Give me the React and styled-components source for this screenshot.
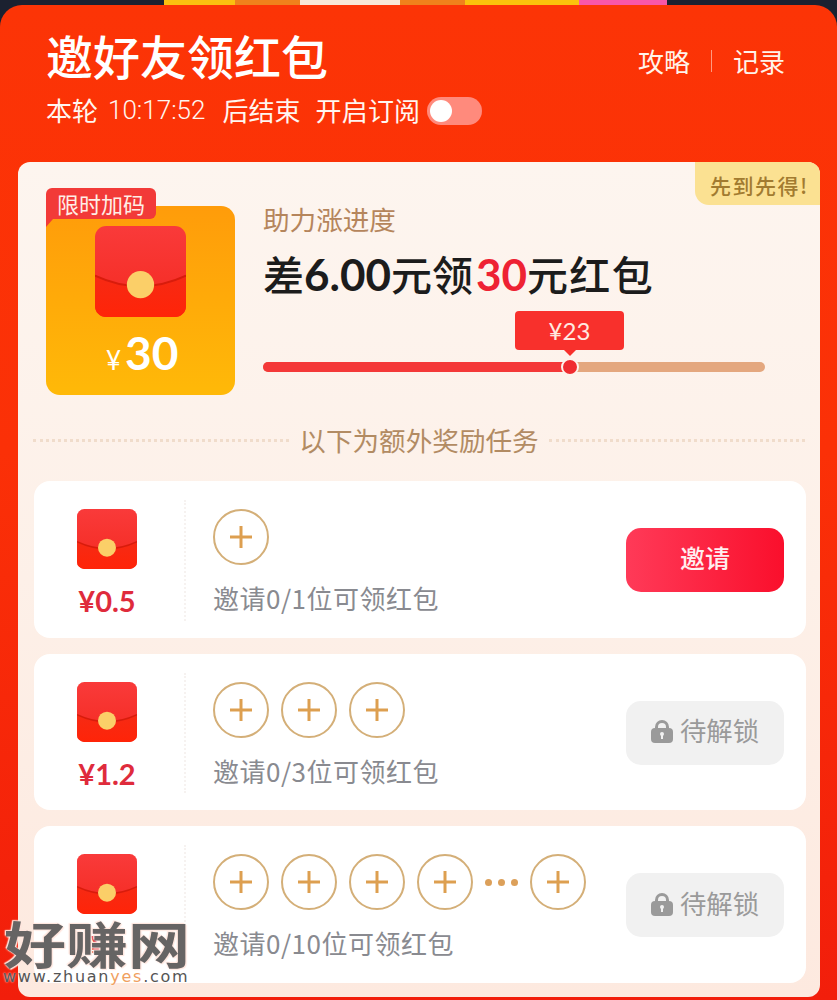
import React from 'react'
import styled, { createGlobalStyle } from 'styled-components'

const GlobalStyle = createGlobalStyle`
  html, body {
    margin: 0;
    padding: 0;
    background: #1b2130;
  }
  * {
    box-sizing: border-box;
  }
`

const cjk = `"Noto Sans CJK SC", "Noto Sans", sans-serif`
const numeric = `Lato, "Noto Sans CJK SC", sans-serif`

const Page = styled.div`
  position: relative;
  width: 837px;
  height: 1000px;
  overflow: hidden;
  font-family: ${cjk};
`

const TopStrip = styled.div`
  height: 5px;
  background: linear-gradient(
    to right,
    #1b2130 0 164px,
    #fbbf10 164px 235px,
    #f0811c 235px 300px,
    #f8e8d8 300px 400px,
    #f0811c 400px 465px,
    #fbc20c 465px 579px,
    #f957a8 579px 667px,
    #1b2130 667px
  );
`

const Panel = styled.div`
  height: 995px;
  padding: 0 17px 0 18px;
  border-radius: 22px 22px 0 0;
  background: linear-gradient(to bottom, #fc3406 0%, #fb3007 45%, #f21e0b 100%);
`

const Header = styled.header`
  height: 157px;
  display: flex;
  justify-content: space-between;
  align-items: flex-start;
  padding: 0 35px 0 28px;
  color: #fff;
`

const Title = styled.h1`
  margin: 22px 0 0;
  font-size: 47px;
  line-height: 56px;
  font-weight: 500;
`

const SubLine = styled.div`
  display: flex;
  align-items: center;
  height: 36px;
  margin-top: 8px;
  font-size: 26px;
  color: #fff6f0;
`

const Countdown = styled.span`
  margin: 2px 17px 0 10px;
  font-family: Roboto, sans-serif;
  font-size: 26px;
  font-weight: 300;
`

const Subscribe = styled.span`
  margin-left: 15px;
  letter-spacing: 0.2px;
`

const Toggle = styled.span`
  display: flex;
  align-items: center;
  width: 55px;
  height: 28px;
  margin: 3px 0 0 7px;
  padding-left: 3px;
  border-radius: 14px;
  background: #ff8a7c;
`

const Knob = styled.span`
  width: 22px;
  height: 22px;
  border-radius: 50%;
  background: #fff;
`

const Links = styled.nav`
  display: flex;
  align-items: center;
  margin-top: 37px;
  font-size: 26px;
  line-height: 38px;
  color: #fff3ea;
`

const LinkDivider = styled.i`
  width: 1px;
  height: 22px;
  margin: 0 21px;
  background: #ff9a80;
`

const Card = styled.main`
  position: relative;
  height: 835px;
  border-radius: 12px;
  overflow: hidden;
  background: linear-gradient(to bottom, #fdf5ef 0%, #fdf0e8 50%, #fde9df 100%);
`

const CornerTag = styled.div`
  position: absolute;
  top: 0;
  right: 0;
  width: 125px;
  height: 43px;
  padding-left: 15px;
  border-radius: 0 0 0 14px;
  background: #fbe192;
  color: #a27b30;
  font-size: 21px;
  font-weight: 500;
  line-height: 47px;
  letter-spacing: 1.5px;
`

const Hero = styled.section`
  display: flex;
  padding: 44px 0 0 28px;
`

const PrizeBox = styled.div`
  position: relative;
  width: 189px;
  height: 189px;
  padding: 20px 0 0 49px;
  border-radius: 14px;
  background: linear-gradient(to bottom, #ff9c0a, #ffb908);
`

const PrizeBadge = styled.div`
  position: absolute;
  top: -18px;
  left: 0;
  width: 110px;
  height: 31px;
  border-radius: 6px 6px 6px 0;
  background: #f23a38;
  color: #ffeee6;
  font-size: 22px;
  line-height: 31px;
  text-align: center;

  &::after {
    content: '';
    position: absolute;
    top: 31px;
    left: 0;
    border-top: 8px solid #f23a38;
    border-right: 7px solid transparent;
  }
`

const PrizeAmount = styled.div`
  display: flex;
  align-items: baseline;
  margin: -2px 0 0 11px;
  color: #fff;
  font-family: ${numeric};
  font-size: 46px;
  line-height: 66px;
  font-weight: 700;
`

const PrizeCurrency = styled.span`
  margin-right: 4px;
  font-size: 26px;
  font-weight: 400;
`

const Info = styled.div`
  width: 502px;
  margin-left: 28px;
`

const InfoLabel = styled.div`
  height: 28px;
  margin-top: -1px;
  color: #b5855c;
  font-size: 26.6px;
  line-height: 28px;
`

const Headline = styled.div`
  height: 44px;
  margin-top: 18px;
  color: #1c1c1c;
  font-size: 41px;
  line-height: 44px;
  font-weight: 500;
  white-space: nowrap;
`

const HeadNum = styled.span`
  font-family: ${numeric};
  font-size: 44px;
  font-weight: 700;
  color: ${(p) => p.$color || 'inherit'};
  margin-left: ${(p) => (p.$color ? '3px' : '0')};
`

const HeadTail = styled.span`
  letter-spacing: 1.3px;
`

const Track = styled.div`
  position: relative;
  height: 10px;
  margin-top: 67px;
  border-radius: 5px;
  background: #e4a77e;
`

const TrackFill = styled.div`
  height: 100%;
  border-radius: 5px 0 0 5px;
  background: #f43838;
`

const Thumb = styled.div`
  position: absolute;
  top: -4px;
  width: 18px;
  height: 18px;
  margin-left: -9px;
  border-radius: 50%;
  border: 2px solid #fdf3ec;
  background: #f02c30;
`

const Bubble = styled.div`
  position: absolute;
  top: -51px;
  width: 109px;
  height: 39px;
  margin-left: -55px;
  border-radius: 4px;
  background: #f8302c;
  color: #ffe9e0;
  font-family: ${numeric};
  font-size: 24px;
  line-height: 39px;
  text-align: center;

  &::after {
    content: '';
    position: absolute;
    left: 50%;
    bottom: -6px;
    margin-left: -6px;
    border-top: 6px solid #f8302c;
    border-left: 6px solid transparent;
    border-right: 6px solid transparent;
  }
`

const SectionTitle = styled.div`
  display: flex;
  align-items: center;
  height: 28px;
  margin: 31px 15px 27px 15px;
  color: #b28b63;
  font-size: 26.6px;
  line-height: 28px;

  span {
    margin: 0 10px 0 10px;
    white-space: nowrap;
  }

  &::before,
  &::after {
    content: '';
    flex: 1;
    height: 0;
    border-top: 3px dotted #f0dccb;
  }
`

const TaskList = styled.section`
  display: flex;
  flex-direction: column;
  gap: 16px;
  padding: 0 14px 0 16px;
`

const TaskRow = styled.article`
  display: flex;
  align-items: stretch;
  height: 156.5px;
  padding: 19px 22px 17px 0;
  border-radius: 16px;
  background: #fff;
`

const RewardCol = styled.div`
  display: flex;
  flex-direction: column;
  align-items: center;
  flex-shrink: 0;
  width: 152px;
  padding: 9px 4px 0 0;
  border-right: 2px dotted #f6f2f0;
`

const RewardAmount = styled.div`
  margin-top: 14px;
  color: #df2b3c;
  font-family: ${numeric};
  font-size: 29px;
  line-height: 36px;
  font-weight: 700;
`

const TaskBody = styled.div`
  flex: 1;
  padding: 9px 0 0 27px;
`

const Slots = styled.div`
  display: flex;
  align-items: center;
  gap: 12px;
`

const Slot = styled.div`
  display: flex;
  align-items: center;
  justify-content: center;
  width: 56px;
  height: 56px;
  border-radius: 50%;
  border: 2px solid #d4af78;
  color: #dd9f50;
`

const More = styled.div`
  display: flex;
  gap: 6px;
  width: 33px;

  i {
    width: 7px;
    height: 7px;
    border-radius: 50%;
    background: #dca05a;
  }
`

const TaskText = styled.div`
  margin-top: 15px;
  color: #898a90;
  font-size: 26px;
  line-height: 36px;
  letter-spacing: 0.5px;
`

const ActionButton = styled.div`
  display: flex;
  align-items: center;
  justify-content: center;
  gap: 7px;
  flex-shrink: 0;
  align-self: center;
  width: 158px;
  height: 64px;
  padding-bottom: 6px;
  border-radius: 15px;
  font-size: ${(p) => (p.$locked ? '26.4px' : '25px')};
  font-weight: ${(p) => (p.$locked ? 400 : 500)};
  color: ${(p) => (p.$locked ? '#9a9a9a' : '#ffeef0')};
  background: ${(p) =>
    p.$locked ? '#f1f1f1' : 'linear-gradient(to right, #ff3a58, #fa0f2c)'};

  svg {
    margin-top: 4px;
  }
`

const Watermark = styled.div`
  position: absolute;
  left: 4px;
  top: 912px;
  width: 190px;
  pointer-events: none;
  color: #666464;
`

const WatermarkName = styled.div`
  font-size: 50px;
  line-height: 60px;
  font-weight: 700;
  white-space: nowrap;
  transform: scaleX(1.24);
  transform-origin: left center;
  text-shadow: 0 0 2px #ffe6de, 1px 1px 1px #ffe6de, -1px -1px 1px #ffe6de;
`

const WatermarkUrl = styled.div`
  margin: -5px 0 0 -1px;
  font-family: "DejaVu Sans", sans-serif;
  font-size: 16px;
  line-height: 20px;
  letter-spacing: 1.75px;
  white-space: nowrap;
  color: #555;
  text-shadow: 0 0 2px #fff;

  b {
    font-weight: 400;
    color: #f0a060;
  }
`

const Envelope = ({ size, id }) => (
  <svg width={size} height={size} viewBox="0 0 90 90">
    <defs>
      <linearGradient id={`top-${id}`} x1="0" y1="0" x2="0" y2="1">
        <stop offset="0" stopColor="#f93a3a" />
        <stop offset="1" stopColor="#f42a20" />
      </linearGradient>
      <linearGradient id={`flap-${id}`} x1="0" y1="0" x2="0" y2="1">
        <stop offset="0" stopColor="#f62a14" />
        <stop offset="1" stopColor="#ff2408" />
      </linearGradient>
    </defs>
    <rect width="90" height="90" rx="11" fill={`url(#top-${id})`} />
    <path d="M0 49 Q45 70 90 49 V79 A11 11 0 0 1 79 90 H11 A11 11 0 0 1 0 79 Z" fill={`url(#flap-${id})`} />
    <path d="M0 49 Q45 70 90 49" fill="none" stroke="#d81c0c" strokeWidth="2" />
    <circle cx="45" cy="58" r="13.5" fill="#fbcf68" />
  </svg>
)

const PlusIcon = () => (
  <svg width="22" height="22" viewBox="0 0 22 22" fill="none" stroke="currentColor" strokeWidth="3">
    <path d="M0 11H22M11 0V22" />
  </svg>
)

const LockIcon = () => (
  <svg width="22" height="23" viewBox="0 0 22 23">
    <path d="M5.5 10V7a5.5 5.5 0 0 1 11 0v3" fill="none" stroke="#9a9a9a" strokeWidth="3" />
    <rect y="8" width="22" height="15" rx="4" fill="#9a9a9a" />
    <circle cx="11" cy="14" r="2" fill="#f1f1f1" />
    <rect x="10" y="14" width="2" height="5" fill="#f1f1f1" />
  </svg>
)

const tasks = [
  { reward: '¥0.5', slots: 1, text: '邀请0/1位可领红包', active: true },
  { reward: '¥1.2', slots: 3, text: '邀请0/3位可领红包' },
  { reward: '¥3', slots: 4, more: true, text: '邀请0/10位可领红包' },
]

const progress = ((570 - 263) / 502) * 100

const App = () => {
  return (
    <Page>
      <GlobalStyle />
      <TopStrip />
      <Panel>
        <Header>
          <div>
            <Title>邀好友领红包</Title>
            <SubLine>
              本轮
              <Countdown>10:17:52</Countdown>
              后结束
              <Subscribe>开启订阅</Subscribe>
              <Toggle>
                <Knob />
              </Toggle>
            </SubLine>
          </div>
          <Links>
            攻略
            <LinkDivider />
            记录
          </Links>
        </Header>
        <Card>
          <CornerTag>先到先得!</CornerTag>
          <Hero>
            <PrizeBox>
              <PrizeBadge>限时加码</PrizeBadge>
              <Envelope size={91} id="hero" />
              <PrizeAmount>
                <PrizeCurrency>¥</PrizeCurrency>30
              </PrizeAmount>
            </PrizeBox>
            <Info>
              <InfoLabel>助力涨进度</InfoLabel>
              <Headline>
                差<HeadNum>6.00</HeadNum>元领<HeadNum $color="#ee2233">30</HeadNum>
                <HeadTail>元红包</HeadTail>
              </Headline>
              <Track>
                <TrackFill style={{ width: `${progress}%` }} />
                <Thumb style={{ left: `${progress}%` }} />
                <Bubble style={{ left: `${progress}%` }}>¥23</Bubble>
              </Track>
            </Info>
          </Hero>
          <SectionTitle>
            <span>以下为额外奖励任务</span>
          </SectionTitle>
          <TaskList>
            {tasks.map((task, i) => (
              <TaskRow key={task.text}>
                <RewardCol>
                  <Envelope size={60} id={`task-${i}`} />
                  <RewardAmount>{task.reward}</RewardAmount>
                </RewardCol>
                <TaskBody>
                  <Slots>
                    {Array.from({ length: task.slots }).map((_, n) => (
                      <Slot key={n}>
                        <PlusIcon />
                      </Slot>
                    ))}
                    {task.more && (
                      <>
                        <More>
                          <i />
                          <i />
                          <i />
                        </More>
                        <Slot>
                          <PlusIcon />
                        </Slot>
                      </>
                    )}
                  </Slots>
                  <TaskText>{task.text}</TaskText>
                </TaskBody>
                {task.active ? (
                  <ActionButton>邀请</ActionButton>
                ) : (
                  <ActionButton $locked>
                    <LockIcon />
                    待解锁
                  </ActionButton>
                )}
              </TaskRow>
            ))}
          </TaskList>
        </Card>
      </Panel>
      <Watermark>
        <WatermarkName>好赚网</WatermarkName>
        <WatermarkUrl>
          www.zhuan<b>yes</b>.com
        </WatermarkUrl>
      </Watermark>
    </Page>
  )
}

export default App
